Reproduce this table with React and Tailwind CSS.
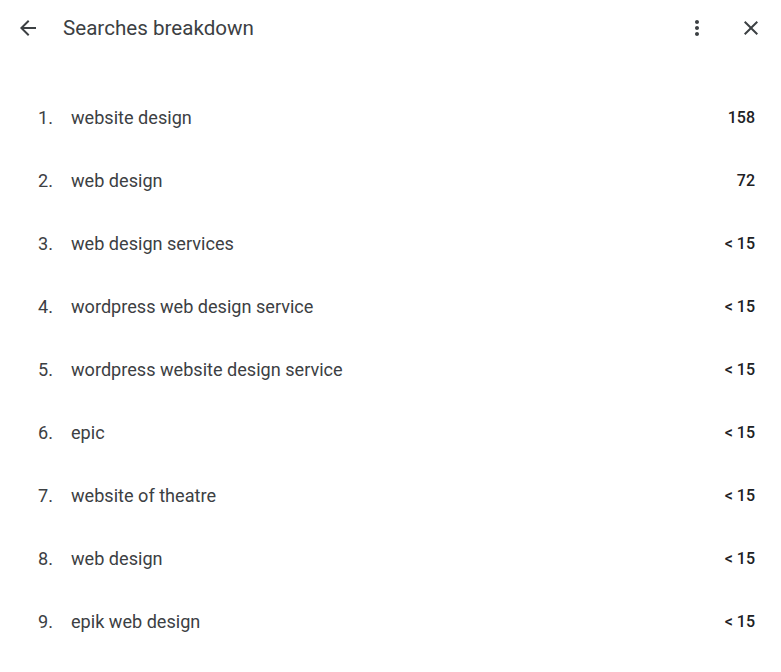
import React from "react";

const rows = [
  ["website design", "158"],
  ["web design", "72"],
  ["web design services", "< 15"],
  ["wordpress web design service", "< 15"],
  ["wordpress website design service", "< 15"],
  ["epic", "< 15"],
  ["website of theatre", "< 15"],
  ["web design", "< 15"],
  ["epik web design", "< 15"],
];

export default function App() {
  return (
    <div className="w-[781px] h-[672px] bg-white overflow-hidden" style={{ fontFamily: "Roboto, 'Noto Sans', sans-serif" }}>
      <div className="h-[56px] flex items-center pl-[16px] pr-[18px]">
        <svg width="24" height="24" viewBox="0 0 24 24" className="text-[#3c4043]">
          <path d="M20 11H7.83l5.59-5.59L12 4l-8 8 8 8 1.41-1.41L7.83 13H20v-2z" fill="currentColor" />
        </svg>
        <div className="ml-[23px] text-[20.6px] text-[#3c4043]">Searches breakdown</div>
        <div className="flex-1" />
        <svg width="24" height="24" viewBox="0 0 24 24" className="text-[#3c4043]">
          <path d="M12 8c1.1 0 2-.9 2-2s-.9-2-2-2-2 .9-2 2 .9 2 2 2zm0 2c-1.1 0-2 .9-2 2s.9 2 2 2 2-.9 2-2-.9-2-2-2zm0 6c-1.1 0-2 .9-2 2s.9 2 2 2 2-.9 2-2-.9-2-2-2z" fill="currentColor" />
        </svg>
        <svg width="24" height="24" viewBox="0 0 24 24" className="ml-[30px] text-[#3c4043]">
          <path d="M19 6.41L17.59 5 12 10.59 6.41 5 5 6.41 10.59 12 5 17.59 6.41 19 12 13.41 17.59 19 19 17.59 13.41 12z" fill="currentColor" />
        </svg>
      </div>
      <div className="pt-[30px] pl-[38px] pr-[26px]">
        {rows.map(([t, n], i) => (
          <div key={i} className="h-[63px] flex items-center">
            <div className="w-[33px] text-[18.1px] text-[#3c4043]">{i + 1}.</div>
            <div className="flex-1 text-[18.1px] text-[#3c4043]">{t}</div>
            <div className="text-[16px] font-medium text-[#202124]">{n}</div>
          </div>
        ))}
      </div>
    </div>
  );
}
